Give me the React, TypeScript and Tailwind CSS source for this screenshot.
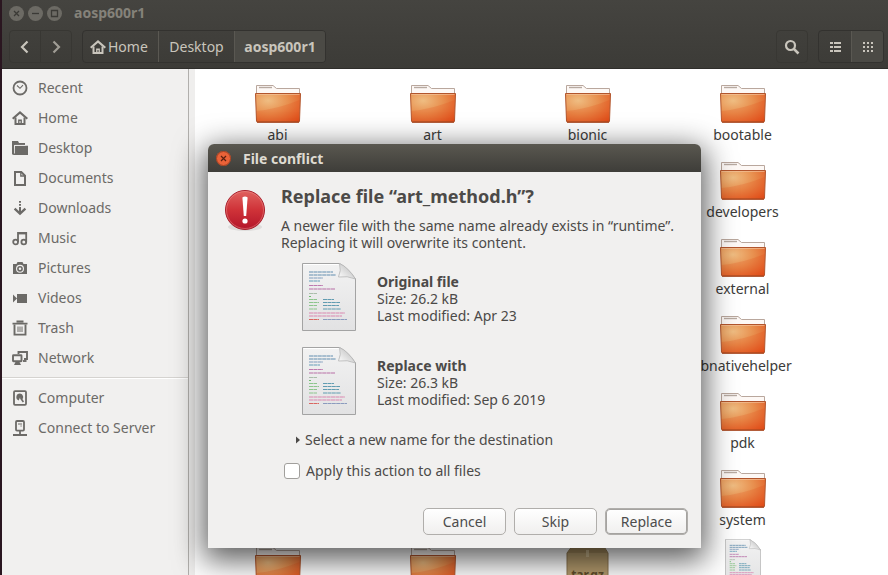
import { ReactNode } from "react";

type IconProps = { className?: string };

function Glyph({ children, className = "size-4" }: { children: ReactNode; className?: string }) {
  return (
    <svg viewBox="0 0 16 16" className={`shrink-0 ${className}`} fill="none" stroke="currentColor" strokeWidth="2" aria-hidden="true">
      {children}
    </svg>
  );
}

const RecentIcon = () => (
  <Glyph>
    <circle cx="8" cy="8" r="6.5" strokeWidth="1.8" />
    <path d="M5 5.5 8 8.3 11 5.2" strokeWidth="1.1" />
  </Glyph>
);

const HomeIcon = ({ className }: IconProps) => (
  <Glyph className={className}>
    <path d="M.7 8.8 8 2.4l7.3 6.4" strokeWidth="2.1" />
    <path d="M3.5 7.5v6.6h9V7.5" />
    <path d="M6.8 14v-3.8h2.4V14" strokeWidth="1.4" />
  </Glyph>
);

const DesktopIcon = () => (
  <Glyph>
    <path d="M0 1h6l1 2h6v2H2.2v9.5H0z" fill="currentColor" stroke="none" />
    <path d="M3.2 5.8H16V15H1.2V9h1z" fill="currentColor" stroke="none" />
    <path d="M2.5 13.5V5.4h11" stroke="#f1f0ef" strokeWidth=".8" />
  </Glyph>
);

const DocumentIcon = () => (
  <Glyph>
    <path d="M3 2h6.3L13 5.7V15H3z" />
    <path d="M8.8 2v4H13" strokeWidth="1.3" />
  </Glyph>
);

const DownloadIcon = () => (
  <Glyph>
    <path d="M8 1v1.8M8 4v1.8M8 7v5" />
    <path d="m2.6 8.6 5.4 5 5.4-5" strokeWidth="2.3" />
  </Glyph>
);

const MusicIcon = () => (
  <Glyph>
    <path d="M6 12V3h8.2v9" strokeWidth="1.8" />
    <path d="M6 3.2h8.2" strokeWidth="2.4" />
    <circle cx="3.6" cy="12" r="2.4" strokeWidth="1.8" />
    <circle cx="11.8" cy="12" r="2.4" strokeWidth="1.8" />
  </Glyph>
);

const PictureIcon = () => (
  <Glyph>
    <path
      fillRule="evenodd"
      d="M5.5 2h5l1 2H15v10H1V4h3.5zM8 4.8a4 4 0 1 0 0 8 4 4 0 0 0 0-8z"
      fill="currentColor"
      stroke="none"
    />
    <circle cx="8" cy="8.8" r="2.1" strokeWidth="1.6" />
  </Glyph>
);

const VideoIcon = () => (
  <Glyph>
    <path d="M5 4h10v9H5zM1 4.5l4 4-4 4z" fill="currentColor" stroke="none" />
  </Glyph>
);

const TrashIcon = () => (
  <Glyph>
    <path d="M.5 3.600h15M4.500 1.500h7" strokeWidth="1.8" />
    <path d="M2.500 4.5V14.600h11V4.5" strokeWidth="1.9" />
    <path d="M6 6.5v5.5M8 6.5v5.5M10 6.5v5.5" strokeWidth="1" />
  </Glyph>
);

const NetworkIcon = () => (
  <Glyph>
    <path d="M6.5 4V2H15v7h-3" strokeWidth="1.9" />
    <path d="M11 11h3.5" strokeWidth="1.9" />
    <rect x="1" y="5.2" width="8.5" height="6" rx=".5" strokeWidth="1.9" />
    <path d="M3.5 12h4l1.5 3H2z" fill="currentColor" stroke="none" />
  </Glyph>
);

const ComputerIcon = () => (
  <Glyph>
    <rect x="2" y="1.2" width="12" height="13.6" rx="1" strokeWidth="1.8" />
    <path d="M8 3.6a3.5 3.5 0 0 0-1.3 6.8L8 7.5l1.8 2.4a3.5 3.5 0 0 0-1.8-6.3z" fill="currentColor" stroke="none" />
    <path d="m8.6 8 2.8 4" strokeWidth="1.6" />
  </Glyph>
);

const ServerIcon = () => (
  <Glyph>
    <rect x="4" y="1" width="8" height="9.6" rx="1" strokeWidth="1.8" />
    <path d="M6 4h4M8.5 6h1.2" strokeWidth="1" />
    <path d="M8 11v3.5M1 15h14" strokeWidth="1.8" />
  </Glyph>
);

function FolderIcon() {
  return (
    <svg viewBox="0 0 48 40" className="h-10 w-12" aria-hidden="true">
      <defs>
        <radialGradient id="folder-face" cx=".28" cy=".25" r="1">
          <stop offset="0" stopColor="#efbd82" />
          <stop offset=".45" stopColor="#e8904f" />
          <stop offset="1" stopColor="#df4a17" />
        </radialGradient>
      </defs>
      <path d="M2.500 12V1.500H19l3.500 3H45.500V12z" fill="#fdf8f5" stroke="#b9a79d" strokeWidth="1" />
      <path d="M5 3.500H18" stroke="#b7aaa1" strokeWidth="1.400" />
      <path d="M1.500 9.500h45l-1 27.500q-.1 1-1 1h-41q-.9 0-1-1z" fill="url(#folder-face)" stroke="#b2552c" strokeWidth="1" />
      <path d="M2.500 27Q24 25 45.500 16L44.800 37H3z" fill="#e2430f" opacity=".18" />
      <path d="M2.500 10.500h43" stroke="#f6c9a4" strokeWidth="1" opacity=".6" />
      <path d="M3 38.200h42" stroke="#a33c12" strokeWidth="1" />
    </svg>
  );
}

const codeLines: [number, number, number, string][] = [
  [7, 9, 24, "#4a7fa5"],
  [7, 12, 27, "#4a7fa5"],
  [7, 15, 14, "#6d8fb5"],
  [7, 18, 11, "#4a8fb0"],
  [7, 22.500, 14, "#b565a5"],
  [7, 26, 26, "#b05a9c"],
  [7, 30.500, 8, "#9fb59f"],
  [7, 33.500, 2, "#58b558"],
  [7, 36.500, 8, "#7cc07c"],
  [21, 36.500, 11, "#4a8fa8"],
  [7, 39.500, 10, "#7cc07c"],
  [21, 39.500, 17, "#4a8fa8"],
  [7, 42.500, 8, "#7cc07c"],
  [21, 42.500, 16, "#4a8fa8"],
  [7, 46, 8, "#7cc07c"],
  [21, 46, 18, "#4a8fa8"],
  [7, 50, 36, "#d977a8"],
  [7, 53, 33, "#d977a8"],
  [7, 56.500, 10, "#d8504a"],
  [21, 56.500, 24, "#7c8fb8"],
];

function CodeFileIcon({ className }: IconProps) {
  return (
    <svg viewBox="0 0 54 68" className={className} aria-hidden="true">
      <defs>
        <linearGradient id="sheet" x1="0" y1="0" x2="0" y2="1">
          <stop offset="0" stopColor="#f2f2f2" />
          <stop offset="1" stopColor="#e2e2e3" />
        </linearGradient>
        <linearGradient id="sheet-fold" x1="0" y1="1" x2=".8" y2=".2">
          <stop offset="0" stopColor="#ffffff" />
          <stop offset="1" stopColor="#c2c2c2" />
        </linearGradient>
      </defs>
      <path d="M.5.5h37Q46 5 53.500 16v51.500H.5z" fill="url(#sheet)" stroke="#a3a3a3" />
      <path d="M1.500 1.500h35" stroke="#fff" />
      {codeLines.map(([x, y, w, color]) => (
        <path key={`${x}-${y}`} d={`M${x} ${y}h${w}`} stroke={color} strokeWidth="1.200" strokeDasharray="4 .4" opacity=".85" />
      ))}
      <path d="M37.500.5q2 7-1 13.500 9-1.500 17 2Q46 4 37.500.5z" fill="url(#sheet-fold)" stroke="#b5b5b5" strokeWidth=".8" />
    </svg>
  );
}

function ArchiveIcon() {
  return (
    <svg viewBox="0 0 48 48" className="size-12" aria-hidden="true">
      <path d="M9 7h30l5 8v33H3V15z" fill="#b39a6c" stroke="#8d7750" />
      <path d="M3.500 15 9 7.500h30l4.500 7.500z" fill="#a38a5d" />
      <path d="M22 12h3v7h-3z" fill="#c9b58c" />
      <text x="23.500" y="41" textAnchor="middle" className="fill-[#5f4c2a] font-['Noto_Sans',sans-serif] text-[12px] font-bold">
        tar.gz
      </text>
    </svg>
  );
}

function ErrorIcon() {
  return (
    <svg viewBox="0 0 44 44" className="size-11 shrink-0" aria-hidden="true">
      <defs>
        <linearGradient id="alert" x1="0" y1="0" x2="0" y2="1">
          <stop offset="0" stopColor="#e0625f" />
          <stop offset=".5" stopColor="#cf3238" />
          <stop offset="1" stopColor="#b3152a" />
        </linearGradient>
      </defs>
      <ellipse cx="22" cy="39" rx="17" ry="4" fill="#000" opacity=".08" />
      <circle cx="22" cy="22" r="19.500" fill="url(#alert)" stroke="#a8202c" />
      <circle cx="22" cy="22" r="18.500" fill="none" stroke="#ef9a94" opacity=".45" />
      <path d="M19.400 9.500q2.600-1.800 5.200 0L23.200 28h-2.400z" fill="#fff" />
      <circle cx="22" cy="33" r="2.600" fill="#fff" />
    </svg>
  );
}

const places = [
  { label: "Recent", icon: <RecentIcon /> },
  { label: "Home", icon: <HomeIcon /> },
  { label: "Desktop", icon: <DesktopIcon /> },
  { label: "Documents", icon: <DocumentIcon /> },
  { label: "Downloads", icon: <DownloadIcon /> },
  { label: "Music", icon: <MusicIcon /> },
  { label: "Pictures", icon: <PictureIcon /> },
  { label: "Videos", icon: <VideoIcon /> },
  { label: "Trash", icon: <TrashIcon /> },
  { label: "Network", icon: <NetworkIcon /> },
];

const devices = [
  { label: "Computer", icon: <ComputerIcon /> },
  { label: "Connect to Server", icon: <ServerIcon /> },
];

function PlaceLink({ label, icon }: { label: string; icon: ReactNode }) {
  return (
    <li>
      <a href="#" className="flex h-[30px] items-center gap-2.5 px-2.5 text-[#6c6a67]">
        {icon}
        {label}
      </a>
    </li>
  );
}

function Sidebar() {
  return (
    <nav aria-label="Places" className="w-[187px] shrink-0 border-r border-[#b1afac] bg-[#f1f0ef] py-1">
      <ul>
        {places.map((p) => (
          <PlaceLink key={p.label} {...p} />
        ))}
      </ul>
      <hr className="my-1 h-0.5 border-t border-b border-t-[#d5d3d0] border-b-white" />
      <ul>
        {devices.map((p) => (
          <PlaceLink key={p.label} {...p} />
        ))}
      </ul>
    </nav>
  );
}

type Entry = { name?: string; kind: "folder" | "code" | "archive"; place: string };

const entries: Entry[] = [
  { name: "abi", kind: "folder", place: "col-start-1 row-start-1" },
  { name: "art", kind: "folder", place: "col-start-2 row-start-1" },
  { name: "bionic", kind: "folder", place: "col-start-3 row-start-1" },
  { name: "bootable", kind: "folder", place: "col-start-4 row-start-1" },
  { name: "developers", kind: "folder", place: "col-start-4 row-start-2" },
  { name: "external", kind: "folder", place: "col-start-4 row-start-3" },
  { name: "libnativehelper", kind: "folder", place: "col-start-4 row-start-4" },
  { name: "pdk", kind: "folder", place: "col-start-4 row-start-5" },
  { name: "system", kind: "folder", place: "col-start-4 row-start-6" },
  { kind: "folder", place: "col-start-1 row-start-7" },
  { kind: "folder", place: "col-start-2 row-start-7" },
  { kind: "archive", place: "col-start-3 row-start-7" },
  { kind: "code", place: "col-start-4 row-start-7" },
];

function FileGrid() {
  return (
    <main className="min-w-0 flex-1 overflow-hidden bg-white pt-1.5 pl-[5px]">
      <ul className="grid auto-rows-[77px] grid-cols-[repeat(4,155px)]">
        {entries.map((e) => (
          <li key={e.place} className={`flex flex-col items-center ${e.place}`}>
            <span className="flex h-[50px] items-end pb-px">
              {e.kind === "folder" && <FolderIcon />}
              {e.kind === "code" && <CodeFileIcon className="h-12 w-9" />}
              {e.kind === "archive" && <ArchiveIcon />}
            </span>
            {e.name && <span className="leading-5 text-[#3c3b39]">{e.name}</span>}
          </li>
        ))}
      </ul>
    </main>
  );
}

function Header() {
  return (
    <header className="flex h-[69px] shrink-0 flex-col border-b border-[#2f2e2b] bg-linear-to-b from-[#454440] to-[#3c3b37]">
      <div className="flex h-[26px] items-center gap-1 pl-[7px] text-[#3b3a36]">
        <button aria-label="Close" className="size-[15px] rounded-full bg-[#6c6a64]">
          <svg viewBox="0 0 15 15" className="size-full" fill="none" stroke="currentColor" strokeWidth="1.300"><path d="m5 5 5 5M10 5l-5 5" /></svg>
        </button>
        <button aria-label="Minimize" className="size-[15px] rounded-full bg-[#6c6a64]">
          <svg viewBox="0 0 15 15" className="size-full" fill="none" stroke="currentColor" strokeWidth="1.300"><path d="M4 7.500h7" /></svg>
        </button>
        <button aria-label="Maximize" className="size-[15px] rounded-full bg-[#6c6a64]">
          <svg viewBox="0 0 15 15" className="size-full" fill="none" stroke="currentColor" strokeWidth="1.300"><path d="M4.500 4.500h6v6h-6z" /></svg>
        </button>
        <h1 className="ml-2 font-bold text-[#85827a]">aosp600r1</h1>
      </div>
      <div className="flex items-center pt-1 pr-1 pl-[7px] text-[#c9c5bc]">
        <div className="flex h-[33px] rounded border border-[#383733]">
          <button aria-label="Back" className="flex w-[31px] items-center justify-center border-r border-[#383733]">
            <svg viewBox="0 0 16 16" className="size-4" fill="none" stroke="currentColor" strokeWidth="2.200"><path d="M10.500 2.500 5 8l5.500 5.500" /></svg>
          </button>
          <button aria-label="Forward" className="flex w-[30px] items-center justify-center text-[#a09d95]">
            <svg viewBox="0 0 16 16" className="size-4" fill="none" stroke="currentColor" strokeWidth="2.200"><path d="M5.500 2.500 11 8l-5.500 5.500" /></svg>
          </button>
        </div>
        <div className="ml-2.5 flex h-[33px] overflow-hidden rounded border border-[#33322f]">
          <button className="flex w-[76px] items-center gap-0.5 border-r border-[#5a5852] pl-[7px]">
            <HomeIcon className="size-4" />
            Home
          </button>
          <button className="w-[76px] border-r border-[#5a5852]">Desktop</button>
          <button className="w-[90px] bg-[#4b4a45] font-bold">aosp600r1</button>
        </div>
        <div className="flex-1" />
        <button aria-label="Search" className="flex h-[33px] w-8 items-center justify-center rounded border border-[#383733]">
          <svg viewBox="0 0 16 16" className="size-4" fill="none" stroke="currentColor"><circle cx="6.500" cy="6.500" r="4.500" strokeWidth="2.200" /><path d="m9.800 9.800 4.700 4.700" strokeWidth="2.600" /></svg>
        </button>
        <div className="ml-2.5 flex h-[33px] overflow-hidden rounded border border-[#33322f]">
          <button aria-label="List view" className="flex w-8 items-center justify-center">
            <svg viewBox="0 0 16 16" className="size-4" fill="currentColor"><path d="M3 3h3v2H3zM7 3h7v2H7zM3 7h3v2H3zM7 7h7v2H7zM3 11h3v2H3zM7 11h7v2H7z" /></svg>
          </button>
          <button aria-label="Icon view" className="flex w-8 items-center justify-center border-l border-[#5a5852] bg-[#4b4a45]">
            <svg viewBox="0 0 16 16" className="size-4" fill="currentColor"><path d="M3 3h2v2H3zM7 3h2v2H7zM11 3h2v2h-2zM3 7h2v2H3zM7 7h2v2H7zM11 7h2v2h-2zM3 11h2v2H3zM7 11h2v2H7zM11 11h2v2h-2z" /></svg>
          </button>
        </div>
      </div>
    </header>
  );
}

function FileSummary({ title, size, modified }: { title: string; size: string; modified: string }) {
  return (
    <div className="flex items-center gap-[21px] pl-[21px]">
      <CodeFileIcon className="h-[68px] w-[54px]" />
      <div className="pt-0.5">
        <h3 className="font-bold">{title}</h3>
        <p>Size: {size}</p>
        <p>Last modified: {modified}</p>
      </div>
    </div>
  );
}

const actionButton =
  "h-[27px] w-[83px] rounded-[5px] border border-[#b0aeab] bg-linear-to-b from-white to-[#f0efee] text-[#4c4c4c]";

function ConflictDialog() {
  return (
    <section
      role="dialog"
      aria-labelledby="dialog-title"
      className="absolute top-36 left-[206px] w-[493px] overflow-hidden rounded-t-md bg-[#f1f0ef] leading-[17px] text-[#4c4a48] shadow-[0_8px_30px_4px_rgba(0,0,0,0.65)]"
    >
      <div className="flex h-7 items-center gap-3 bg-linear-to-b from-[#5a5850] to-[#3e3d39] px-2">
        <button aria-label="Close" className="size-[15px] rounded-full bg-[#ea6238] text-[#5a2010]">
          <svg viewBox="0 0 15 15" className="size-full" fill="none" stroke="currentColor" strokeWidth="1.200"><circle cx="7.500" cy="7.500" r="7" stroke="#8c3a20" strokeWidth=".8" /><path d="m5 5 5 5M10 5l-5 5" /></svg>
        </button>
        <h2 id="dialog-title" className="font-bold text-[#dfdbd2]">File conflict</h2>
      </div>
      <div className="flex gap-3.5 pt-3 pr-2 pl-[15px]">
        <div className="pt-1">
          <ErrorIcon />
        </div>
        <div className="min-w-0 flex-1">
          <h2 className="text-lg leading-6 font-bold">Replace file “art_method.h”?</h2>
          <p className="pt-[9px] whitespace-nowrap">
            A newer file with the same name already exists in “runtime”.
            <br />
            Replacing it will overwrite its content.
          </p>
          <div className="flex flex-col gap-4 pt-3">
            <FileSummary title="Original file" size="26.2 kB" modified="Apr 23" />
            <FileSummary title="Replace with" size="26.3 kB" modified="Sep 6 2019" />
          </div>
          <button aria-expanded="false" className="mt-4 ml-3.5 flex items-center gap-1">
            <svg viewBox="0 0 6 8" className="h-2 w-1.5" fill="currentColor" aria-hidden="true"><path d="M1 .5 5 4 1 7.500z" /></svg>
            Select a new name for the destination
          </button>
          <label className="mt-3.5 flex items-center gap-1.5 pl-[3px]">
            <input type="checkbox" className="size-4 appearance-none rounded-[3px] border border-[#a19f9c] bg-white" />
            Apply this action to all files
          </label>
        </div>
      </div>
      <div className="flex justify-end gap-2 px-[13px] pt-[29px] pb-[13px]">
        <button className={actionButton}>Cancel</button>
        <button className={actionButton}>Skip</button>
        <button className={`${actionButton} ring-1 ring-[#a5a3a0] ring-inset`}>Replace</button>
      </div>
    </section>
  );
}

export default function App() {
  return (
    <div className="relative flex h-screen overflow-hidden border-l-2 border-[#2a1620] bg-white font-['Noto_Sans',sans-serif] text-sm">
      <div className="flex min-w-0 flex-1 flex-col">
        <Header />
        <div className="flex min-h-0 flex-1">
          <Sidebar />
          <div className="w-1.5 shrink-0 bg-[#efeeed]" />
          <FileGrid />
        </div>
      </div>
      <ConflictDialog />
    </div>
  );
}
